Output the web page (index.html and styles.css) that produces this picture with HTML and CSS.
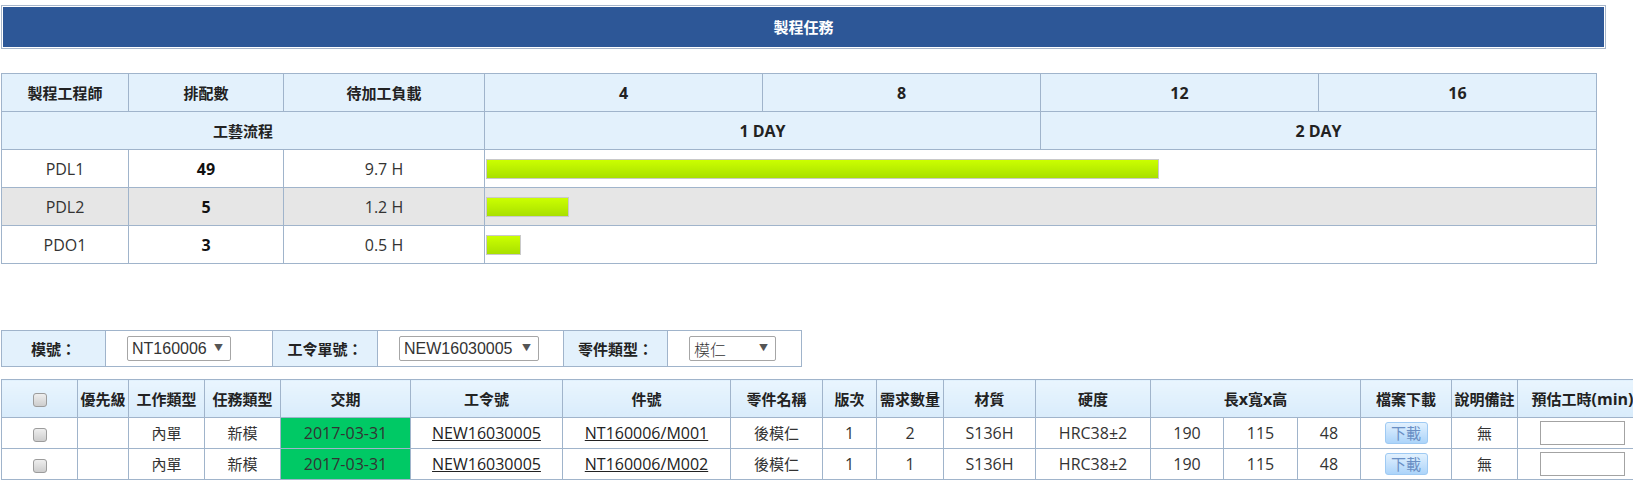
FILE: index.html
```html
<!DOCTYPE html>
<html>
<head>
	<meta charset="UTF-8">
	<title>製程任務</title>
	<link rel="stylesheet" href="styles.css">
</head>
<body>
	<div class="page">
		<div class="title-bar">
			<div class="title">製程任務</div>
		</div>

		<table class="load-table">
			<colgroup>
				<col class="c-eng"><col class="c-cnt"><col class="c-load">
				<col class="c-hour"><col class="c-hour"><col class="c-hour"><col class="c-hour">
			</colgroup>
			<tr>
				<th>製程工程師</th>
				<th>排配數</th>
				<th>待加工負載</th>
				<th class="en">4</th>
				<th class="en">8</th>
				<th class="en">12</th>
				<th class="en">16</th>
			</tr>
			<tr>
				<th colspan="3">工藝流程</th>
				<th colspan="2" class="en">1 DAY</th>
				<th colspan="2" class="en">2 DAY</th>
			</tr>
			<tr>
				<td class="en">PDL1</td>
				<td class="en num">49</td>
				<td class="en">9.7 H</td>
				<td colspan="4" class="chart"><div class="bar" style="width: 60.625%"></div></td>
			</tr>
			<tr class="alt">
				<td class="en">PDL2</td>
				<td class="en num">5</td>
				<td class="en">1.2 H</td>
				<td colspan="4" class="chart"><div class="bar" style="width: 7.5%"></div></td>
			</tr>
			<tr>
				<td class="en">PDO1</td>
				<td class="en num">3</td>
				<td class="en">0.5 H</td>
				<td colspan="4" class="chart"><div class="bar" style="width: 3.125%"></div></td>
			</tr>
		</table>

		<table class="filter-table">
			<colgroup>
				<col class="f-label"><col class="f-model"><col class="f-label2">
				<col class="f-order"><col class="f-label3"><col class="f-part">
			</colgroup>
			<tr>
				<th>模號：</th>
				<td>
					<span class="pick pick-model">
						<select><option>NT160006</option></select>
					</span>
				</td>
				<th>工令單號：</th>
				<td>
					<span class="pick pick-order">
						<select><option>NEW16030005</option></select>
					</span>
				</td>
				<th>零件類型：</th>
				<td>
					<span class="pick pick-part">
						<select><option>模仁</option></select>
					</span>
				</td>
			</tr>
		</table>

		<table class="task-table">
			<colgroup>
				<col style="width: 76px"><col style="width: 51px"><col style="width: 76px">
				<col style="width: 76px"><col style="width: 130px"><col style="width: 152px">
				<col style="width: 168px"><col style="width: 92px"><col style="width: 54px">
				<col style="width: 67px"><col style="width: 92px"><col style="width: 115px">
				<col style="width: 73px"><col style="width: 74px"><col style="width: 63px">
				<col style="width: 91px"><col style="width: 66px"><col style="width: 130px">
			</colgroup>
			<thead>
				<tr>
					<th><input type="checkbox" class="check"></th>
					<th>優先級</th>
					<th>工作類型</th>
					<th>任務類型</th>
					<th>交期</th>
					<th>工令號</th>
					<th>件號</th>
					<th>零件名稱</th>
					<th>版次</th>
					<th>需求數量</th>
					<th>材質</th>
					<th>硬度</th>
					<th colspan="3">長<span class="en">x</span>寬<span class="en">x</span>高</th>
					<th>檔案下載</th>
					<th>說明備註</th>
					<th>預估工時<span class="en">(min)</span></th>
				</tr>
			</thead>
			<tbody>
				<tr>
					<td><input type="checkbox" class="check"></td>
					<td></td>
					<td>內單</td>
					<td>新模</td>
					<td class="en due">2017-03-31</td>
					<td class="en"><a href="#">NEW16030005</a></td>
					<td class="en"><a href="#">NT160006/M001</a></td>
					<td>後模仁</td>
					<td class="en">1</td>
					<td class="en">2</td>
					<td class="en">S136H</td>
					<td class="en">HRC38±2</td>
					<td class="en">190</td>
					<td class="en">115</td>
					<td class="en">48</td>
					<td><button class="btn-dl">下載</button></td>
					<td>無</td>
					<td><input type="text" class="est"></td>
				</tr>
				<tr>
					<td><input type="checkbox" class="check"></td>
					<td></td>
					<td>內單</td>
					<td>新模</td>
					<td class="en due">2017-03-31</td>
					<td class="en"><a href="#">NEW16030005</a></td>
					<td class="en"><a href="#">NT160006/M002</a></td>
					<td>後模仁</td>
					<td class="en">1</td>
					<td class="en">1</td>
					<td class="en">S136H</td>
					<td class="en">HRC38±2</td>
					<td class="en">190</td>
					<td class="en">115</td>
					<td class="en">48</td>
					<td><button class="btn-dl">下載</button></td>
					<td>無</td>
					<td><input type="text" class="est"></td>
				</tr>
			</tbody>
		</table>
	</div>
</body>
</html>
```

FILE: styles.css
```css
html {
	overflow: hidden;
}
body {
	margin: 0;
	padding: 0;
	background-color: #fff;
	font-family: "Open Sans", "Noto Sans CJK TC", sans-serif;
	font-size: 15px;
	color: #333;
}
.page {
	padding: 5px 0 0 1px;
}
.title-bar {
	box-sizing: border-box;
	width: 1605px;
	border: 1px solid #a7b6ca;
	padding: 1px;
}
.title {
	height: 40px;
	line-height: 40px;
	background-color: #2d5797;
	color: #fff;
	font-weight: bold;
	text-align: center;
}

table {
	border-collapse: collapse;
	table-layout: fixed;
}
th, td {
	border: 1px solid #a0b4cb;
	padding: 0 2px;
	text-align: center;
	line-height: 20px;
	white-space: nowrap;
	overflow: hidden;
}
th {
	background-color: #e3f1fc;
	color: #222;
	font-weight: bold;
}
/* latin text sits a size up next to the CJK glyphs */
.en {
	font-size: 16px;
}

/* load chart */
.load-table {
	width: 1596px;
	margin-top: 24px;
}
.load-table .c-eng { width: 127px; }
.load-table .c-cnt { width: 155px; }
.load-table .c-load { width: 201px; }
.load-table .c-hour { width: 278px; }
.load-table th,
.load-table td {
	height: 37px;
}
.load-table .num {
	font-weight: bold;
	color: #111;
}
.load-table .alt td {
	background-color: #e6e6e6;
}
.load-table .chart {
	padding: 0 0 0 1px;
	text-align: left;
}
.bar {
	box-sizing: border-box;
	height: 20px;
	border: 1px solid #c9c9c9;
	background: linear-gradient(#cbff00, #a9e000);
}

/* filters */
.filter-table {
	width: 800px;
	margin-top: 66px;
}
.filter-table .f-label { width: 104px; }
.filter-table .f-model { width: 167px; }
.filter-table .f-label2 { width: 105px; }
.filter-table .f-order { width: 186px; }
.filter-table .f-label3 { width: 104px; }
.filter-table .f-part { width: 134px; }
.filter-table th,
.filter-table td {
	height: 35px;
}
.filter-table td {
	text-align: left;
	padding-left: 21px;
}
.pick {
	position: relative;
	display: inline-block;
	vertical-align: middle;
}
.pick select {
	-webkit-appearance: none;
	appearance: none;
	box-sizing: border-box;
	height: 25px;
	margin: 0;
	padding: 0 18px 0 4px;
	border: 1px solid #a6a6a6;
	border-radius: 2px;
	background-color: #fff;
	font-family: "Liberation Sans", Arial, sans-serif;
	font-size: 16px;
	color: #333;
}
.pick-part select {
	font-family: "Noto Sans CJK TC", sans-serif;
	font-weight: 300;
}
.pick::after {
	content: "▼";
	position: absolute;
	right: 8px;
	top: 7px;
	font-size: 9px;
	line-height: 10px;
	color: #555;
	pointer-events: none;
}
.pick-model select { width: 104px; }
.pick-order select { width: 140px; }
.pick-part select { width: 87px; }

/* tasks */
.task-table {
	width: 1646px;
	margin-top: 12px;
}
.task-table th {
	height: 37px;
	padding: 0;
	background: linear-gradient(#e9f5fe, #d9ecfb);
}
.task-table td {
	height: 30px;
	padding: 0;
}
.task-table .due {
	background-color: #00c965;
}
.task-table a {
	color: #222;
	text-decoration: underline;
}
.check {
	-webkit-appearance: none;
	appearance: none;
	width: 14px;
	height: 14px;
	margin: 0;
	border: 1px solid #9c9c9c;
	border-radius: 3px;
	background: linear-gradient(#eeeeee, #cdcdcd);
	vertical-align: middle;
}
.btn-dl {
	width: 43px;
	height: 22px;
	padding: 0;
	border: 1px solid #9fcaf3;
	border-radius: 3px;
	background: linear-gradient(#e2f1fe, #acd4fa);
	font-family: "Open Sans", "Noto Sans CJK TC", sans-serif;
	font-size: 15px;
	line-height: 20px;
	color: #6a8fc4;
	vertical-align: middle;
}
.est {
	box-sizing: border-box;
	width: 85px;
	height: 24px;
	margin: 0;
	border: 1px solid #a3a3a3;
	vertical-align: middle;
}
```
